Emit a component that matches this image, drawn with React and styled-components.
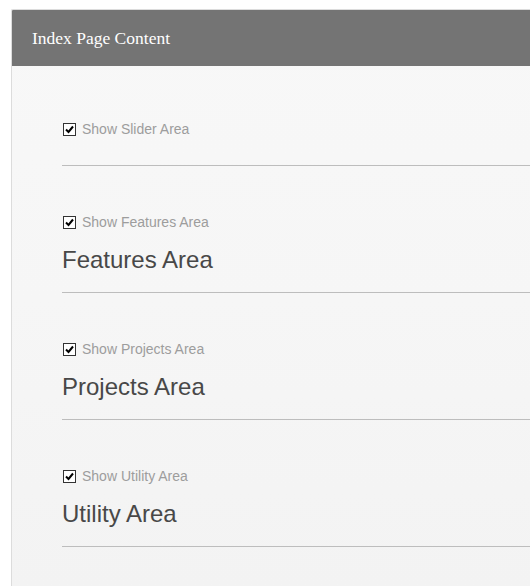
import React from "react";
import styled, { createGlobalStyle } from "styled-components";

const GlobalStyle = createGlobalStyle`
  html, body {
    margin: 0;
    padding: 0;
    background: #ffffff;
    overflow: hidden;
  }
  body {
    font-family: "Liberation Sans", Arial, sans-serif;
  }
`;

const Page = styled.div`
  padding: 9px 0 0 11px;
  height: 586px;
  box-sizing: border-box;
`;

const Panel = styled.div`
  border: 1px solid #dcdcdc;
  border-right: none;
  border-bottom: none;
  border-top-left-radius: 2px;
  overflow: hidden;
  height: 100%;
  display: flex;
  flex-direction: column;
  background: linear-gradient(#f8f8f8 0%, #f6f6f6 50%, #f3f3f3 100%);
`;

const Header = styled.div`
  height: 56px;
  background: #747474;
  padding: 1px 0 0 20px;
  box-sizing: border-box;
  display: flex;
  align-items: center;
  font-family: "Liberation Serif", Georgia, serif;
  font-size: 17.5px;
  color: #ffffff;
`;

const Body = styled.div`
  flex: 1;
  padding: 53px 0 0 50px;
  display: flex;
  flex-direction: column;
  gap: 46px;
`;

const Section = styled.div`
  display: flex;
  flex-direction: column;
`;

const Row = styled.label`
  display: flex;
  align-items: center;
  height: 19px;
  font-size: 14px;
  color: #9d9d9d;
  gap: 6px;
  padding-left: 1px;
`;

const Box = styled.span`
  width: 13px;
  height: 13px;
  box-sizing: border-box;
  border: 1px solid #333333;
  background: #ffffff;
  display: inline-flex;
  align-items: center;
  justify-content: center;
  margin-top: 2px;
`;

const Heading = styled.h2`
  margin: 14px 0 0;
  font-weight: normal;
  font-size: 24px;
  line-height: 30px;
  color: #484848;
`;

const Rule = styled.div`
  height: 1px;
  background: #bdbdbd;
  margin-top: ${(p) => (p.$tall ? "17px" : "27px")};
`;

const Check = () => (
  <Box>
    <svg width="9" height="9" viewBox="0 0 9 9">
      <path d="M1 4.5 L3.5 7 L8 1.5" fill="none" stroke="#000" strokeWidth="2" />
    </svg>
  </Box>
);

const sections = [
  { label: "Show Slider Area", title: "" },
  { label: "Show Features Area", title: "Features Area" },
  { label: "Show Projects Area", title: "Projects Area" },
  { label: "Show Utility Area", title: "Utility Area" },
];

export default function App() {
  return (
    <>
      <GlobalStyle />
      <Page>
        <Panel>
          <Header>Index Page Content</Header>
          <Body>
            {sections.map((s) => (
              <Section key={s.label}>
                <Row>
                  <Check />
                  {s.label}
                </Row>
                {s.title && <Heading>{s.title}</Heading>}
                <Rule $tall={!!s.title} />
              </Section>
            ))}
          </Body>
        </Panel>
      </Page>
    </>
  );
}
